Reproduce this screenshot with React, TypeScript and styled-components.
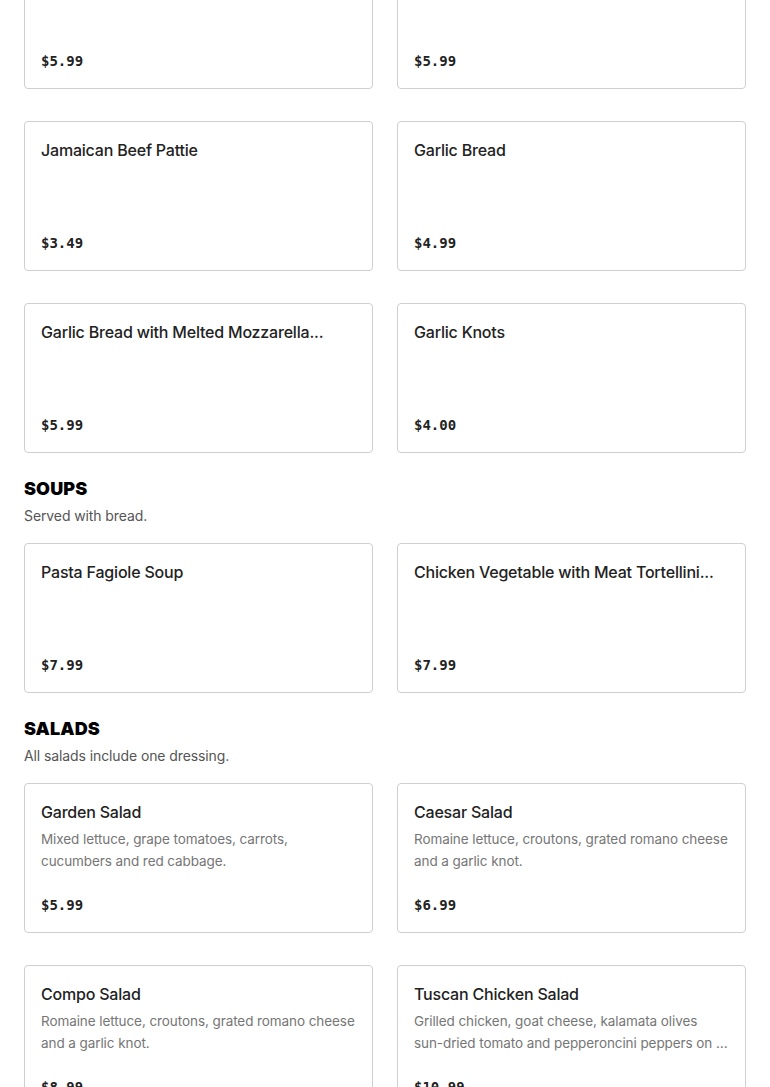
import React from 'react'
import styled, { createGlobalStyle } from 'styled-components'

type Item = { name: string; desc?: string; price: string }
type Section = { title?: string; note?: string; items: Item[] }

const sections: Section[] = [
  {
    items: [
      { name: 'Mozzarella Sticks', price: '$5.99' },
      { name: 'Chicken Wings', price: '$5.99' },
      { name: 'Jamaican Beef Pattie', price: '$3.49' },
      { name: 'Garlic Bread', price: '$4.99' },
      { name: 'Garlic Bread with Melted Mozzarella...', price: '$5.99' },
      { name: 'Garlic Knots', price: '$4.00' },
    ],
  },
  {
    title: 'SOUPS',
    note: 'Served with bread.',
    items: [
      { name: 'Pasta Fagiole Soup', price: '$7.99' },
      { name: 'Chicken Vegetable with Meat Tortellini...', price: '$7.99' },
    ],
  },
  {
    title: 'SALADS',
    note: 'All salads include one dressing.',
    items: [
      { name: 'Garden Salad', desc: 'Mixed lettuce, grape tomatoes, carrots, cucumbers and red cabbage.', price: '$5.99' },
      { name: 'Caesar Salad', desc: 'Romaine lettuce, croutons, grated romano cheese and a garlic knot.', price: '$6.99' },
      { name: 'Compo Salad', desc: 'Romaine lettuce, croutons, grated romano cheese and a garlic knot.', price: '$8.99' },
      {
        name: 'Tuscan Chicken Salad',
        desc: 'Grilled chicken, goat cheese, kalamata olives sun-dried tomato and pepperoncini peppers on a bed of romaine lettuce.',
        price: '$10.99',
      },
    ],
  },
]

function App() {
  return (
    <>
      <GlobalStyle />
      <Menu>
        {sections.map((s, i) => (
          <MenuSection key={i}>
            {s.title && (
              <SectionHead>
                <SectionTitle>{s.title}</SectionTitle>
                <SectionNote>{s.note}</SectionNote>
              </SectionHead>
            )}
            <Grid>
              {s.items.map((it) => (
                <Card key={it.name}>
                  <ItemName>{it.name}</ItemName>
                  {it.desc && <ItemDesc>{it.desc}</ItemDesc>}
                  <Price>{it.price}</Price>
                </Card>
              ))}
            </Grid>
          </MenuSection>
        ))}
      </Menu>
    </>
  )
}

const GlobalStyle = createGlobalStyle`
  body {
    margin: 0;
    background: #fff;
    font-family: Inter, "Liberation Sans", sans-serif;
    color: #222;
    overflow: hidden;
  }
`

const Menu = styled.div`
  display: flex;
  flex-direction: column;
  gap: 24px;
  padding: 0 24px;
  margin-top: -61px;
`

const MenuSection = styled.section`
  display: flex;
  flex-direction: column;
  gap: 17px;
`

const SectionHead = styled.div`
  display: flex;
  flex-direction: column;
  gap: 5px;
`

const SectionTitle = styled.h2`
  margin: 0;
  font-size: 18px;
  line-height: 24px;
  font-weight: 900;
  color: #000;
  letter-spacing: 0.1px;
`

const SectionNote = styled.p`
  margin: 0;
  font-size: 14px;
  line-height: 20px;
  color: #555;
  letter-spacing: -0.1px;
`

const Grid = styled.div`
  display: grid;
  grid-template-columns: 1fr 1fr;
  column-gap: 24px;
  row-gap: 32px;
`

const Card = styled.div`
  box-sizing: border-box;
  height: 150px;
  border: 1px solid #cfcfcf;
  border-radius: 4px;
  padding: 16px 16px 17px;
  display: flex;
  flex-direction: column;
  min-width: 0;
`

const ItemName = styled.h3`
  margin: 0;
  font-size: 16px;
  line-height: 24px;
  font-weight: 500;
  color: #222;
  letter-spacing: -0.2px;
  white-space: nowrap;
  overflow: hidden;
  text-overflow: ellipsis;
`

const ItemDesc = styled.p`
  margin: 4px 0 0;
  font-size: 13.5px;
  line-height: 22px;
  color: #767676;
  letter-spacing: -0.08px;
  display: -webkit-box;
  -webkit-line-clamp: 2;
  -webkit-box-orient: vertical;
  overflow: hidden;
`

const Price = styled.span`
  margin-top: auto;
  font-family: "DejaVu Sans Mono", "Liberation Mono", monospace;
  font-size: 14px;
  line-height: 20px;
  font-weight: 700;
  color: #222;
`

export default App
